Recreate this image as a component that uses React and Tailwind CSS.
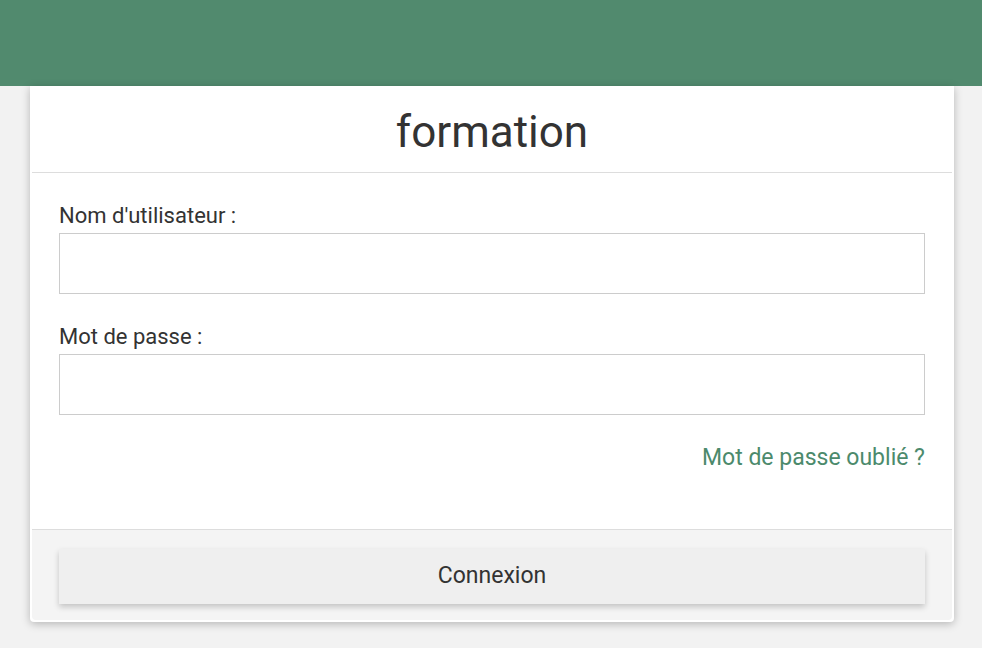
import React from 'react';

export default function App() {
  return (
    <div className="min-h-[648px] bg-[#f2f2f2]" style={{ fontFamily: 'Roboto, "Liberation Sans", sans-serif' }}>
      <div className="h-[86px] bg-[#518a6e]" />
      <div className="mx-[30px] w-[924px] bg-white p-[2px] shadow-[0_2px_8px_rgba(0,0,0,0.25)] rounded-b">
        <div className="h-[85px] flex items-center justify-center border-b border-[#dddddd]">
          <h1 className="text-[44px] text-[#333333] leading-none mt-[3px]">formation</h1>
        </div>
        <div className="px-[27px] pt-[28px] pb-[56px]">
          <label className="block text-[22px] text-[#333333] leading-[30px] mb-[2px]">Nom d'utilisateur :</label>
          <input className="block w-full h-[61px] border border-[#cccccc] bg-white outline-none" />
          <label className="block text-[22px] text-[#333333] leading-[30px] mt-[28px] mb-[2px]">Mot de passe :</label>
          <input type="password" className="block w-full h-[61px] border border-[#cccccc] bg-white outline-none" />
          <div className="flex justify-end mt-[28px]">
            <a href="#" className="text-[23px] text-[#4c8a6c] leading-[30px]">Mot de passe oublié ?</a>
          </div>
        </div>
        <div className="border-t border-[#dddddd] bg-[#f4f4f4] rounded-b px-[27px] pt-[19px] pb-[16px]">
          <button className="w-full h-[55px] bg-[#efefef] text-[23px] text-[#333333] shadow-[0_3px_6px_rgba(0,0,0,0.2)]">Connexion</button>
        </div>
      </div>
    </div>
  );
}
